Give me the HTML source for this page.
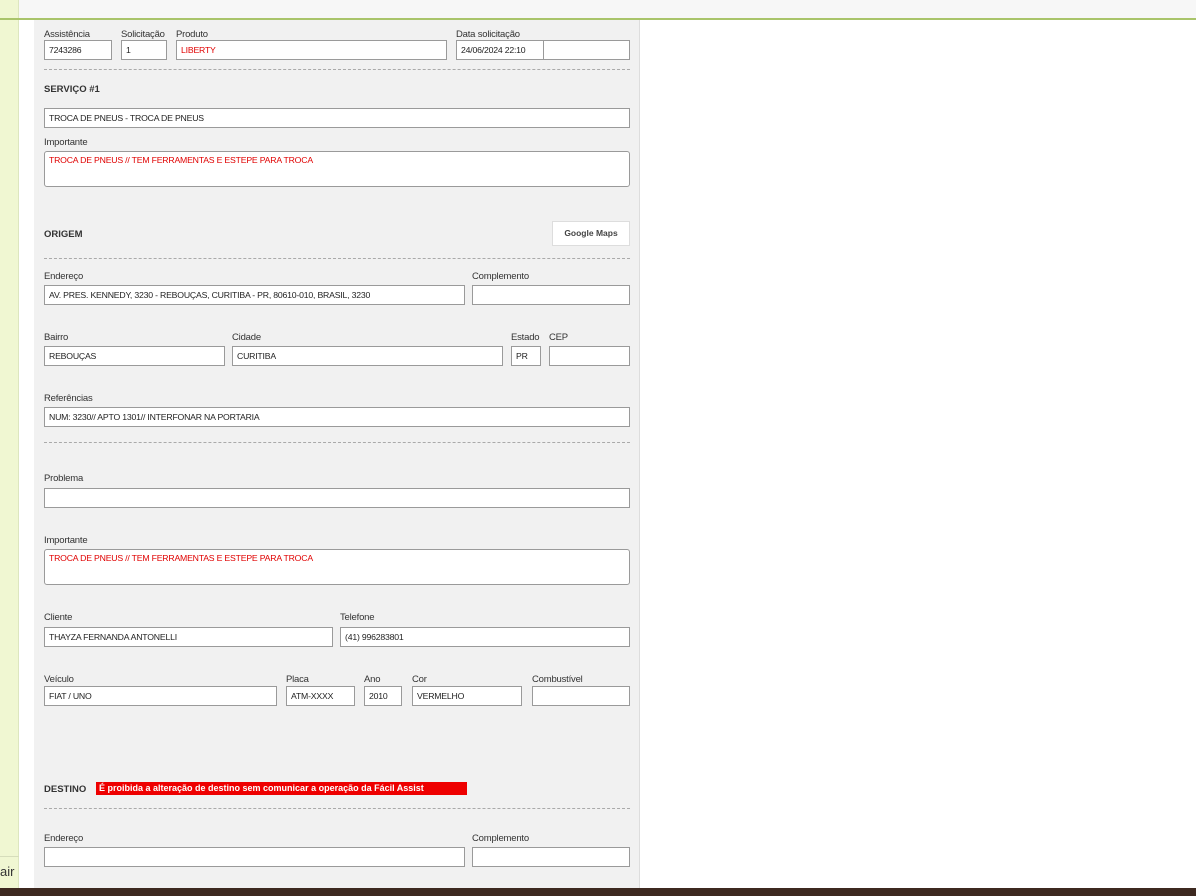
<!DOCTYPE html>
<html><head><meta charset="utf-8"><style>
*{margin:0;padding:0;box-sizing:border-box}
body{width:1196px;height:896px;position:relative;background:#fff;font-family:"Liberation Sans",Tahoma,sans-serif;font-size:9.5px;color:#333;overflow:hidden}
div{position:absolute}
.l{font-size:9.5px;color:#333;line-height:12px;white-space:nowrap;margin-top:2px;letter-spacing:-0.2px}
.i{height:20px;background:#fff;border:1px solid #9a9a9a;padding-left:4px;line-height:18px;font-size:8.7px;color:#222;white-space:nowrap;overflow:hidden;letter-spacing:-0.2px}
.t{height:36px;background:#fff;border:1px solid #9a9a9a;border-radius:3px;padding:2px 4px;font-size:8.7px;color:#e00000;line-height:12px;letter-spacing:-0.2px}
.d{left:44px;width:586px;border-top:1px dashed #aaa;height:0}
.h{font-weight:bold;font-size:9.5px;color:#333;line-height:12px;margin-top:2px}
.red{color:#e00000}
</style></head><body>
<div style="left:0;top:0;width:1196px;height:18px;background:#f7f7f7"></div>
<div style="left:0;top:18px;width:1196px;height:2px;background:#a9c46a"></div>
<div style="left:0;top:20px;width:19px;height:868px;background:#f0f7d2;border-right:1px solid #dde6bf"></div>
<div style="left:0;top:0;width:19px;height:18px;background:#f0f7d2;border-right:1px solid #dde6bf"></div>
<div style="left:0;top:856px;width:19px;height:1px;background:#d6ddbb"></div>
<div style="left:0;top:864px;font-size:13px;color:#333;line-height:16px">air</div>
<div style="left:34px;top:20px;width:606px;height:868px;background:#f1f1f1;border-right:1px solid #ddd"></div>
<div style="left:0;top:888px;width:1196px;height:8px;background:#3d2920"></div>

<div class="l" style="left:44px;top:27px">Assistência</div>
<div class="l" style="left:121px;top:27px">Solicitação</div>
<div class="l" style="left:176px;top:27px">Produto</div>
<div class="l" style="left:456px;top:27px">Data solicitação</div>
<div class="i" style="left:44px;top:40px;width:68px">7243286</div>
<div class="i" style="left:121px;top:40px;width:46px">1</div>
<div class="i red" style="left:176px;top:40px;width:271px">LIBERTY</div>
<div class="i" style="left:456px;top:40px;width:88px">24/06/2024 22:10</div>
<div class="i" style="left:543px;top:40px;width:87px"></div>
<div class="d" style="top:69px"></div>

<div class="h" style="left:44px;top:82px">SERVIÇO #1</div>
<div class="i" style="left:44px;top:108px;width:586px">TROCA DE PNEUS - TROCA DE PNEUS</div>
<div class="l" style="left:44px;top:135px">Importante</div>
<div class="t" style="left:44px;top:151px;width:586px">TROCA DE PNEUS // TEM FERRAMENTAS E ESTEPE PARA TROCA</div>

<div class="h" style="left:44px;top:227px">ORIGEM</div>
<div style="left:552px;top:221px;width:78px;height:25px;background:#fff;border:1px solid #ddd;font-size:8.5px;font-weight:bold;color:#444;text-align:center;line-height:23px">Google Maps</div>
<div class="d" style="top:258px"></div>

<div class="l" style="left:44px;top:269px">Endereço</div>
<div class="l" style="left:472px;top:269px">Complemento</div>
<div class="i" style="left:44px;top:285px;width:421px">AV. PRES. KENNEDY, 3230 - REBOUÇAS, CURITIBA - PR, 80610-010, BRASIL, 3230</div>
<div class="i" style="left:472px;top:285px;width:158px"></div>

<div class="l" style="left:44px;top:330px">Bairro</div>
<div class="l" style="left:232px;top:330px">Cidade</div>
<div class="l" style="left:511px;top:330px">Estado</div>
<div class="l" style="left:549px;top:330px">CEP</div>
<div class="i" style="left:44px;top:346px;width:181px">REBOUÇAS</div>
<div class="i" style="left:232px;top:346px;width:271px">CURITIBA</div>
<div class="i" style="left:511px;top:346px;width:30px">PR</div>
<div class="i" style="left:549px;top:346px;width:81px"></div>

<div class="l" style="left:44px;top:391px">Referências</div>
<div class="i" style="left:44px;top:407px;width:586px">NUM: 3230// APTO 1301// INTERFONAR NA PORTARIA</div>
<div class="d" style="top:442px"></div>

<div class="l" style="left:44px;top:471px">Problema</div>
<div class="i" style="left:44px;top:488px;width:586px"></div>
<div class="l" style="left:44px;top:533px">Importante</div>
<div class="t" style="left:44px;top:549px;width:586px">TROCA DE PNEUS // TEM FERRAMENTAS E ESTEPE PARA TROCA</div>

<div class="l" style="left:44px;top:610px">Cliente</div>
<div class="l" style="left:340px;top:610px">Telefone</div>
<div class="i" style="left:44px;top:627px;width:289px">THAYZA FERNANDA ANTONELLI</div>
<div class="i" style="left:340px;top:627px;width:290px">(41) 996283801</div>

<div class="l" style="left:44px;top:672px">Veículo</div>
<div class="l" style="left:286px;top:672px">Placa</div>
<div class="l" style="left:364px;top:672px">Ano</div>
<div class="l" style="left:412px;top:672px">Cor</div>
<div class="l" style="left:532px;top:672px">Combustível</div>
<div class="i" style="left:44px;top:686px;width:233px">FIAT / UNO</div>
<div class="i" style="left:286px;top:686px;width:69px">ATM-XXXX</div>
<div class="i" style="left:364px;top:686px;width:38px">2010</div>
<div class="i" style="left:412px;top:686px;width:110px">VERMELHO</div>
<div class="i" style="left:532px;top:686px;width:98px"></div>

<div class="h" style="left:44px;top:782px">DESTINO</div>
<div style="left:96px;top:782px;width:371px;height:13px;background:#ee0000;color:#fff;font-weight:bold;font-size:9px;line-height:13px;padding-left:3px;white-space:nowrap;overflow:hidden">É proibida a alteração de destino sem comunicar a operação da Fácil Assist</div>
<div class="d" style="top:808px"></div>
<div class="l" style="left:44px;top:831px">Endereço</div>
<div class="l" style="left:472px;top:831px">Complemento</div>
<div class="i" style="left:44px;top:847px;width:421px"></div>
<div class="i" style="left:472px;top:847px;width:158px"></div>
</body></html>
